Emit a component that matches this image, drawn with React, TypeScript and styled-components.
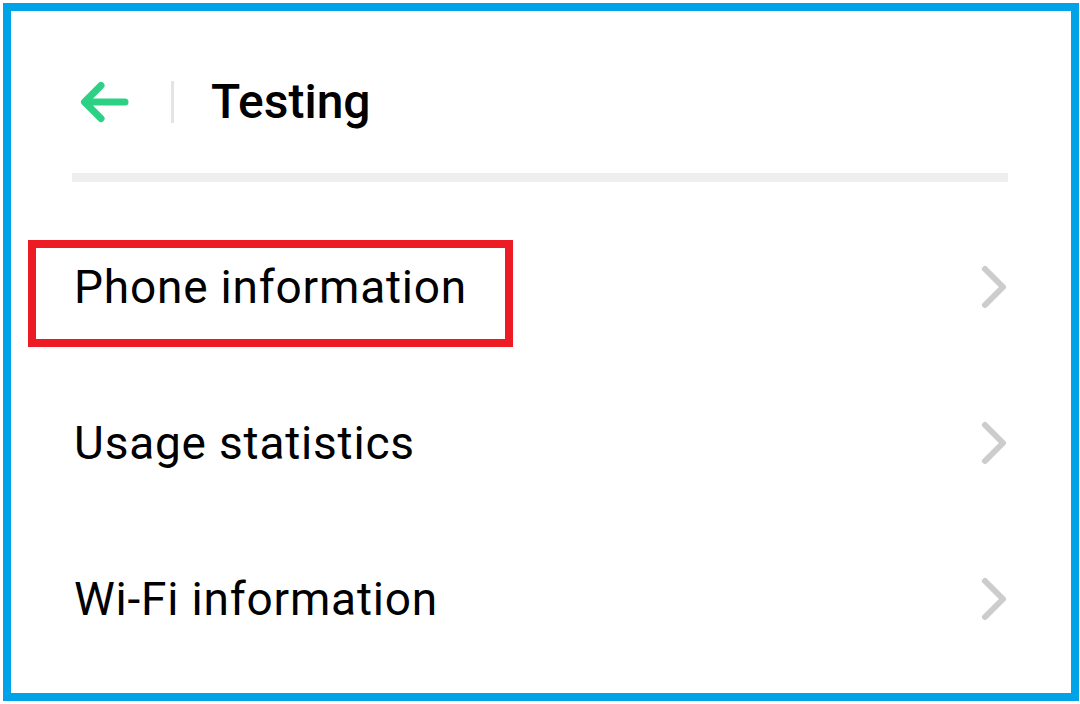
import React from "react";
import styled, { createGlobalStyle } from "styled-components";

const GlobalStyle = createGlobalStyle`
  html, body { margin: 0; padding: 0; background: #ffffff; }
  body { font-family: Roboto, "Noto Sans", "Liberation Sans", sans-serif; }
  * { box-sizing: border-box; }
`;

const Frame = styled.div`
  margin: 3px 0 0 3px;
  width: 1076px;
  height: 698px;
  border: 8px solid #00a3e8;
  background: #ffffff;
  padding: 0 63px 0 61px;
  display: flex;
  flex-direction: column;
  overflow: hidden;
`;

const Header = styled.div`
  display: flex;
  align-items: center;
  height: 60px;
  margin-top: 61px;
`;

const BackButton = styled.button`
  display: flex;
  align-items: center;
  justify-content: center;
  width: 50px;
  height: 44px;
  padding: 0;
  margin-left: 8px;
  border: none;
  background: none;
`;

const Divider = styled.div`
  width: 3px;
  height: 42px;
  background: #e4e4e4;
  margin-left: 41px;
  margin-right: 37px;
`;

const Title = styled.h1`
  margin: 0;
  font-size: 48px;
  font-weight: 500;
  color: #000;
  line-height: 1;
`;

const Rule = styled.div`
  height: 9px;
  background: #eeeeee;
  margin-top: 41px;
`;

const List = styled.ul`
  list-style: none;
  margin: 0;
  padding: 27px 0 0;
`;

const Row = styled.li`
  height: 156px;
  display: flex;
  align-items: center;
  justify-content: space-between;
`;

const Label = styled.span<{ $highlighted?: boolean }>`
  position: relative;
  font-size: 46px;
  font-weight: 400;
  letter-spacing: 0.8px;
  color: #000;
  margin-left: 2px;
  ${(p) =>
    p.$highlighted &&
    `
    &::after {
      content: "";
      position: absolute;
      left: -46px;
      right: -46px;
      top: -20px;
      bottom: -33px;
      border: 8px solid #ed1c24;
      pointer-events: none;
    }
  `}
`;

const Arrow = () => (
  <svg width="50" height="44" viewBox="0 0 50 44" fill="none">
    <path
      d="M5 22 H45 M21 5.5 L4.5 22 L21 38.5"
      stroke="#2dd184"
      strokeWidth="7"
      strokeLinecap="round"
      strokeLinejoin="round"
    />
  </svg>
);

const Chevron = () => (
  <svg width="28" height="46" viewBox="0 0 28 46" fill="none">
    <path
      d="M5 5 L23 23 L5 41"
      stroke="#cccccc"
      strokeWidth="6"
      strokeLinecap="round"
      strokeLinejoin="round"
    />
  </svg>
);

const items = [
  { label: "Phone information", highlighted: true },
  { label: "Usage statistics" },
  { label: "Wi-Fi information" },
];

export default function App() {
  return (
    <>
      <GlobalStyle />
      <Frame>
        <Header>
          <BackButton aria-label="Back">
            <Arrow />
          </BackButton>
          <Divider />
          <Title>Testing</Title>
        </Header>
        <Rule />
        <List>
          {items.map((it) => (
            <Row key={it.label}>
              <Label $highlighted={it.highlighted}>{it.label}</Label>
              <Chevron />
            </Row>
          ))}
        </List>
      </Frame>
    </>
  );
}
